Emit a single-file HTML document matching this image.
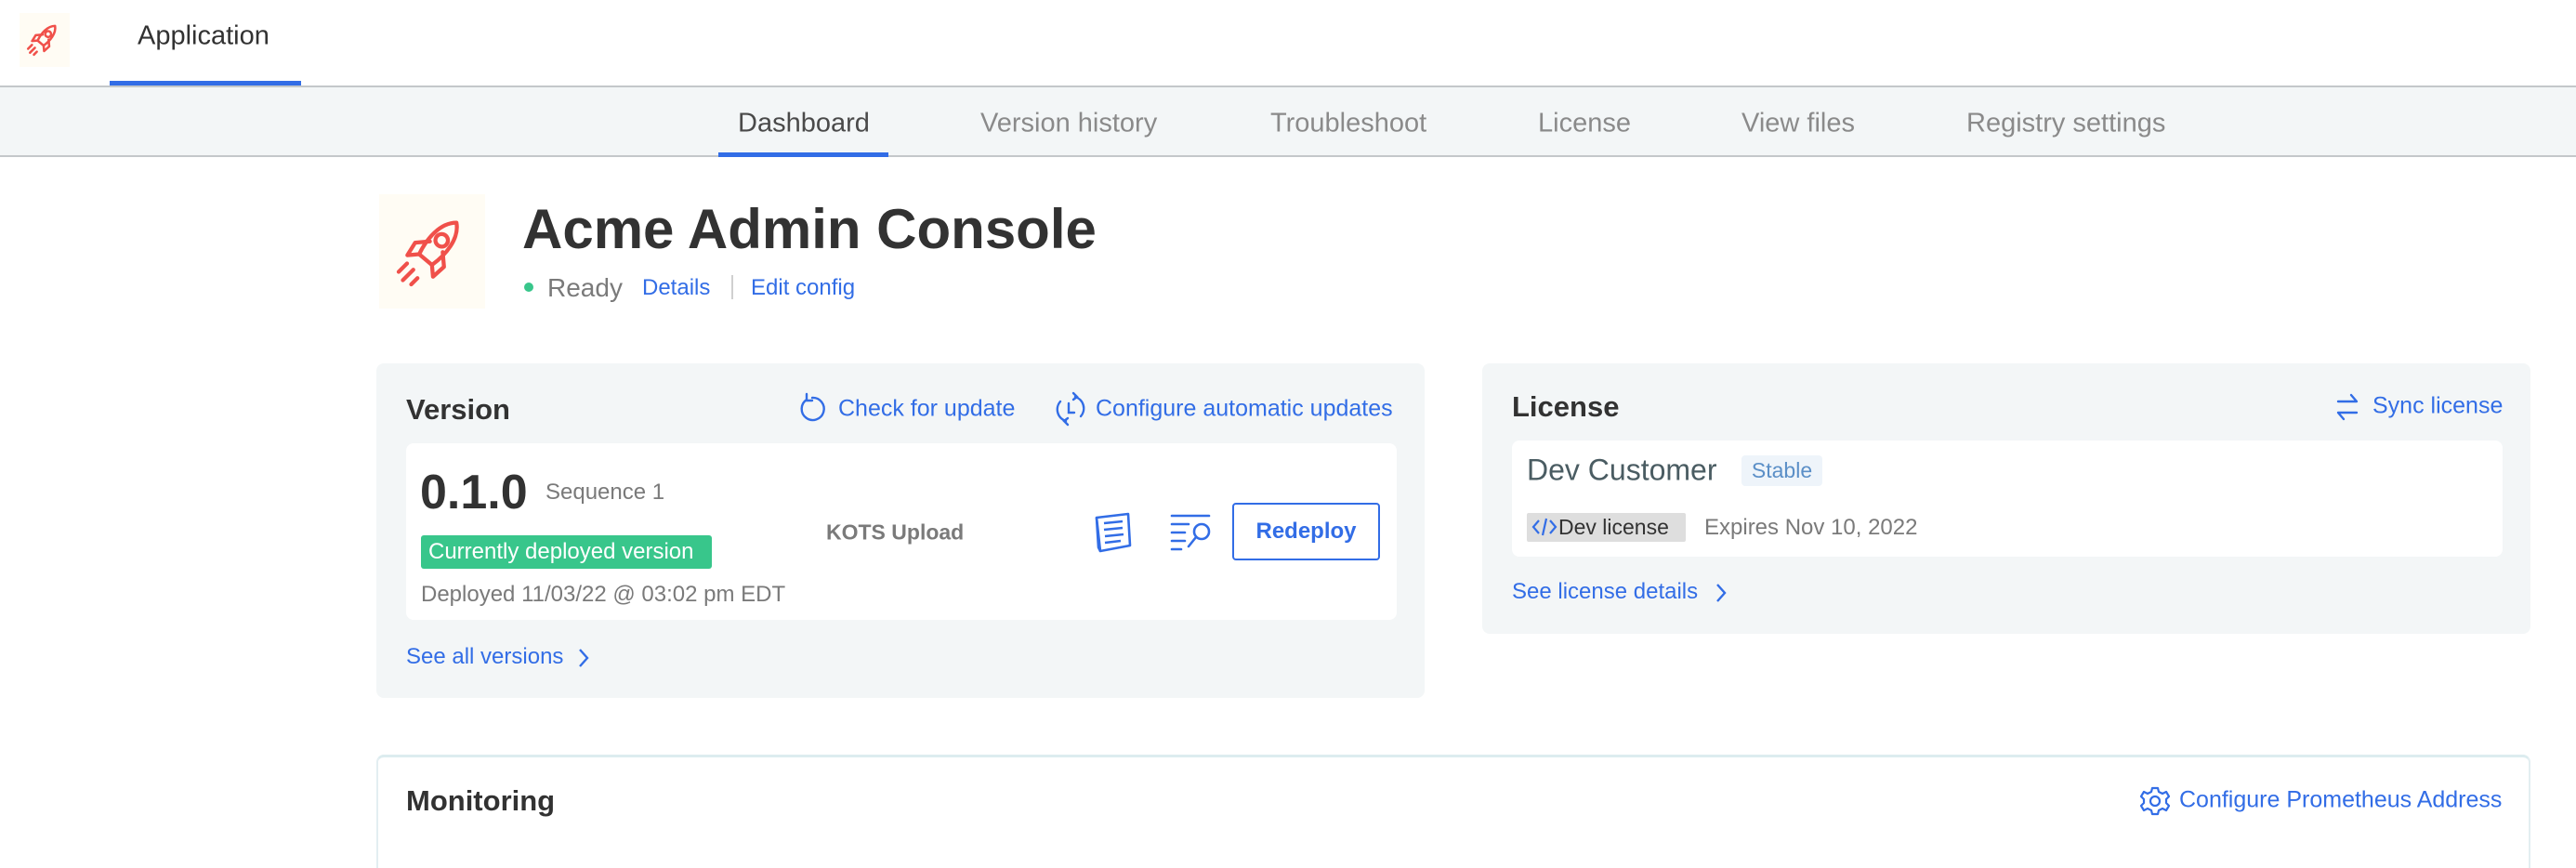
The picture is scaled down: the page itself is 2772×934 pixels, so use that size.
<!DOCTYPE html>
<html><head><meta charset="utf-8"><style>
*{margin:0;padding:0;box-sizing:border-box}
html,body{width:2772px;height:934px;overflow:hidden}
body{background:#fff;font-family:"Liberation Sans",Arial,sans-serif;position:relative;color:#323232}
.a{position:absolute;white-space:nowrap}
.blue{color:#326de6}
.card{position:absolute;background:#f3f6f7;border-radius:8px}
.inner{position:absolute;background:#fff;border-radius:8px}
.vc{transform:translateY(-50%)}
</style></head><body>
<!-- header -->
<div class="a" style="left:21px;top:14px;width:54px;height:58px;background:#fffcf4"></div>
<svg class="a" style="left:26px;top:21px" width="42" height="42" viewBox="0 0 40 40" fill="none" stroke="#f0504a" stroke-width="2.4" stroke-linejoin="round" stroke-linecap="round">
<g transform="rotate(40 22 18)"><path d="M22 3 C28 8 28 18 26 26 L18 26 C16 18 16 8 22 3 Z"/><circle cx="22" cy="14" r="3"/><path d="M18 18 L13 23 L14 30 L18 26"/><path d="M26 18 L31 23 L30 30 L26 26"/></g>
<path d="M8 26 L4 30 M11 29 L6 34 M13 33 L10 36"/></svg>
<div class="a vc" style="left:148px;top:39px;font-size:29px;color:#323232">Application</div>
<div class="a" style="left:118px;top:87px;width:206px;height:5px;background:#326de6"></div>
<div class="a" style="left:0;top:92px;width:2772px;height:2px;background:#c4c8ca"></div>
<!-- subnav -->
<div class="a" style="left:0;top:94px;width:2772px;height:75px;background:#f3f6f7;border-bottom:2px solid #c4c8ca"></div>
<div class="a vc" style="left:794px;top:133px;font-size:29px;color:#4a4a4a">Dashboard</div>
<div class="a vc" style="left:1055px;top:133px;font-size:29px;color:#8a8a8a">Version history</div>
<div class="a vc" style="left:1367px;top:133px;font-size:29px;color:#8a8a8a">Troubleshoot</div>
<div class="a vc" style="left:1655px;top:133px;font-size:29px;color:#8a8a8a">License</div>
<div class="a vc" style="left:1874px;top:133px;font-size:29px;color:#8a8a8a">View files</div>
<div class="a vc" style="left:2116px;top:133px;font-size:29px;color:#8a8a8a">Registry settings</div>
<div class="a" style="left:773px;top:164px;width:183px;height:5px;background:#326de6"></div>
<!-- app title -->
<div class="a" style="left:408px;top:209px;width:114px;height:123px;background:#fffcf4"></div>
<svg class="a" style="left:420px;top:222px" width="90" height="96" viewBox="0 0 40 40" fill="none" stroke="#f0504a" stroke-width="1.9" stroke-linejoin="round" stroke-linecap="round">
<g transform="rotate(40 22 18)"><path d="M22 3 C28 8 28 18 26 26 L18 26 C16 18 16 8 22 3 Z"/><circle cx="22" cy="14" r="3"/><path d="M18 18 L13 23 L14 30 L18 26"/><path d="M26 18 L31 23 L30 30 L26 26"/></g>
<path d="M8 26 L4 30 M11 29 L6 34 M13 33 L10 36"/></svg>
<div class="a" style="left:562px;top:209px;font-size:60px;font-weight:bold;color:#323232;line-height:76px">Acme Admin Console</div>
<div class="a" style="left:564px;top:304px;width:10px;height:10px;border-radius:50%;background:#38c68b"></div>
<div class="a vc" style="left:589px;top:310px;font-size:28px;color:#7a7a7a">Ready</div>
<div class="a vc blue" style="left:691px;top:310px;font-size:24px">Details</div>
<div class="a" style="left:787px;top:296px;width:2px;height:26px;background:#d0d0d0"></div>
<div class="a vc blue" style="left:808px;top:310px;font-size:24px">Edit config</div>
<!-- version card -->
<div class="card" style="left:405px;top:391px;width:1128px;height:360px"></div>
<div class="a vc" style="left:437px;top:441px;font-size:31px;font-weight:bold">Version</div>
<svg class="a" style="left:858px;top:421px" width="32" height="38" viewBox="0 0 32 38" fill="none" stroke="#326de6" stroke-width="2.4" stroke-linecap="round"><path d="M10 9 A12 12 0 1 0 16 7"/><path d="M10 3 L10 10 L16 10"/></svg>
<div class="a vc blue" style="left:902px;top:440px;font-size:25px">Check for update</div>
<svg class="a" style="left:1133px;top:420px" width="38" height="40" viewBox="0 0 38 40" fill="none" stroke="#326de6" stroke-width="2.4" stroke-linecap="round"><path d="M8 12 A13 13 0 0 0 14 33"/><path d="M24 7 A13 13 0 0 1 30 28"/><path d="M22 3 L26 7 L22 10"/><path d="M16 37 L12 33 L16 30"/><path d="M17 14 L17 24 L23 24"/></svg>
<div class="a vc blue" style="left:1179px;top:440px;font-size:25px">Configure automatic updates</div>
<div class="inner" style="left:437px;top:477px;width:1066px;height:190px"></div>
<div class="a" style="left:452px;top:499px;font-size:52px;font-weight:bold;line-height:62px">0.1.0</div>
<div class="a vc" style="left:587px;top:530px;font-size:24px;color:#7a7a7a">Sequence 1</div>
<div class="a" style="left:453px;top:576px;width:313px;height:36px;background:#38c68b;border-radius:3px;color:#fff;font-size:24px;line-height:36px;padding-left:8px">Currently deployed version</div>
<div class="a vc" style="left:453px;top:640px;font-size:24px;color:#7a7a7a">Deployed 11/03/22 @ 03:02 pm EDT</div>
<div class="a vc" style="left:889px;top:573px;font-size:23px;font-weight:bold;color:#7a7a7a">KOTS Upload</div>
<svg class="a" style="left:1176px;top:549px" width="46" height="48" viewBox="0 0 46 48" fill="none" stroke="#326de6" stroke-width="2.6" stroke-linejoin="round"><path d="M4 8 L38 4 L40 38 L8 44 Z"/><path d="M8 44 L6 40 L4 8"/><path d="M12 14 L32 12 M12 21 L32 19 M13 28 L33 26 M13 35 L30 33"/></svg>
<svg class="a" style="left:1259px;top:552px" width="48" height="44" viewBox="0 0 48 44" fill="none" stroke="#326de6" stroke-width="2.6" stroke-linecap="round"><path d="M2 3 L42 3 M2 12 L20 12 M2 21 L16 21 M2 30 L16 30 M2 39 L12 39"/><circle cx="34" cy="20" r="8"/><path d="M28 26 L20 36"/></svg>
<div class="a" style="left:1326px;top:541px;width:159px;height:62px;border:2px solid #326de6;border-radius:4px;color:#326de6;font-size:24px;font-weight:bold;text-align:center;line-height:58px">Redeploy</div>
<div class="a vc blue" style="left:437px;top:707px;font-size:24px">See all versions</div>
<svg class="a" style="left:621px;top:697px" width="14" height="22" viewBox="0 0 14 22" fill="none" stroke="#326de6" stroke-width="2.4"><path d="M3 2 L11 11 L3 20"/></svg>
<!-- license card -->
<div class="card" style="left:1595px;top:391px;width:1128px;height:291px"></div>
<div class="a vc" style="left:1627px;top:438px;font-size:31px;font-weight:bold">License</div>
<svg class="a" style="left:2512px;top:420px" width="28" height="36" viewBox="0 0 28 36" fill="none" stroke="#326de6" stroke-width="2.4" stroke-linecap="round" stroke-linejoin="round"><path d="M4 12 L24 12 L18 5"/><path d="M24 24 L4 24 L10 31"/></svg>
<div class="a vc blue" style="left:2553px;top:437px;font-size:25px">Sync license</div>
<div class="inner" style="left:1627px;top:474px;width:1066px;height:125px"></div>
<div class="a vc" style="left:1643px;top:506px;font-size:32px;color:#4a5c62">Dev Customer</div>
<div class="a" style="left:1874px;top:490px;width:87px;height:33px;background:#eef4fa;border-radius:4px;color:#5b8fc7;font-size:23px;line-height:33px;text-align:center">Stable</div>
<div class="a" style="left:1643px;top:552px;width:171px;height:31px;background:#dedede;border-radius:2px;font-size:23px;line-height:31px;padding-left:34px;color:#323232">Dev license</div>
<svg class="a" style="left:1648px;top:556px" width="28" height="22" viewBox="0 0 28 22" fill="none" stroke="#326de6" stroke-width="2.2"><path d="M8 4 L2 11 L8 18 M20 4 L26 11 L20 18 M16 2 L12 20"/></svg>
<div class="a vc" style="left:1834px;top:568px;font-size:24px;color:#7a7a7a">Expires Nov 10, 2022</div>
<div class="a vc blue" style="left:1627px;top:637px;font-size:24px">See license details</div>
<svg class="a" style="left:1845px;top:627px" width="14" height="22" viewBox="0 0 14 22" fill="none" stroke="#326de6" stroke-width="2.4"><path d="M3 2 L11 11 L3 20"/></svg>
<!-- monitoring -->
<div class="a" style="left:405px;top:812px;width:2318px;height:122px;border:2px solid #e3eef1;border-top:3px solid #dcecef;border-bottom:none;border-radius:8px 8px 0 0;background:#fff"></div>
<div class="a vc" style="left:437px;top:862px;font-size:31px;font-weight:bold">Monitoring</div>
<svg class="a" style="left:2302px;top:845px" width="34" height="34" viewBox="0 0 34 34" fill="none" stroke="#326de6" stroke-width="2.2" stroke-linejoin="round"><path d="M14 3 L20 3 L21 7 L25 9 L29 7 L32 12 L29 15 L29 19 L32 22 L29 27 L25 25 L21 27 L20 31 L14 31 L13 27 L9 25 L5 27 L2 22 L5 19 L5 15 L2 12 L5 7 L9 9 L13 7 Z"/><circle cx="17" cy="17" r="5"/></svg>
<div class="a vc blue" style="left:2345px;top:861px;font-size:25px">Configure Prometheus Address</div>
</body></html>
